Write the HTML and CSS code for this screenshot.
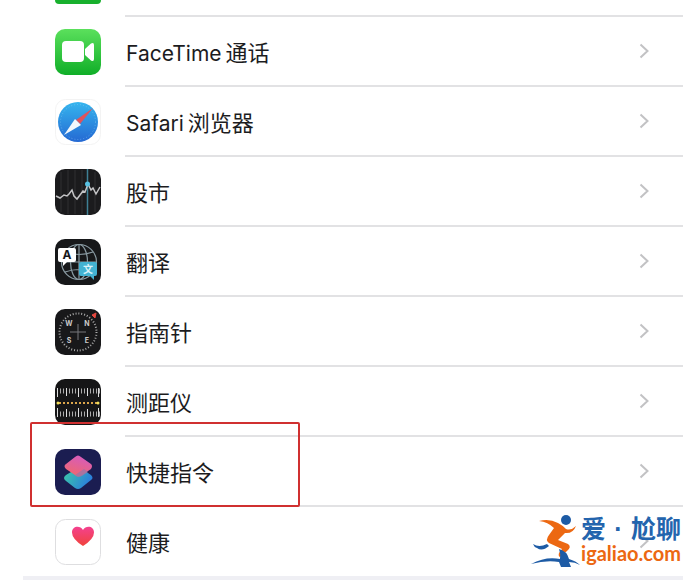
FILE: index.html
```
<!DOCTYPE html>
<html lang="zh-CN">

<head>
    <title>设置</title>
    <meta charset="utf-8">
    <meta name="viewport" content="width=device-width, initial-scale=1">
    <link rel="stylesheet" href="styles.css">
</head>

<body>
    <svg class="defs" aria-hidden="true">
        <defs>
            <linearGradient id="green" x1="0" y1="0" x2="0" y2="1">
                <stop offset="0" stop-color="#5be05c" />
                <stop offset="1" stop-color="#10ae28" />
            </linearGradient>
            <linearGradient id="blue" x1="0" y1="0" x2="0" y2="1">
                <stop offset="0" stop-color="#35b5ee" />
                <stop offset="1" stop-color="#2569d3" />
            </linearGradient>
            <linearGradient id="pink" x1="0.7" y1="0" x2="0.3" y2="1">
                <stop offset="0" stop-color="#d55bc0" />
                <stop offset="1" stop-color="#f0686c" />
            </linearGradient>
            <linearGradient id="teal" x1="0" y1="0" x2="1" y2="0.4">
                <stop offset="0" stop-color="#3ccba5" />
                <stop offset="1" stop-color="#2b7fdc" />
            </linearGradient>
            <linearGradient id="heart" x1="0" y1="0" x2="0" y2="1">
                <stop offset="0" stop-color="#f4418f" />
                <stop offset="1" stop-color="#f0433b" />
            </linearGradient>
            <symbol id="chevron" viewBox="0 0 10 16">
                <path d="M1.5 1.5L8.5 8L1.5 14.5" fill="none" stroke="#c2c2c4" stroke-width="2" />
            </symbol>
        </defs>
    </svg>

    <main class="page">
        <ul class="list">
            <li class="row row-cut">
                <span class="icon-green"></span>
                <span class="line"></span>
            </li>
            <li class="row">
                <svg class="icon" viewBox="0 0 46 46">
                    <rect width="46" height="46" rx="10" fill="url(#green)" />
                    <rect x="7" y="12" width="22" height="21" rx="4" fill="#fff" />
                    <path d="M30 20L36 14.500Q39 13 39 16V30Q39 33 36 31.500L30 26Z" fill="#fff" />
                </svg>
                <a class="line" href="#facetime"><span><span class="en">FaceTime</span>通话</span><svg class="chevron"><use href="#chevron" /></svg></a>
            </li>
            <li class="row">
                <svg class="icon" viewBox="0 0 46 46">
                    <rect x="0.500" y="0.500" width="45" height="45" rx="10" fill="#fff" stroke="#f3f3f3" />
                    <circle cx="23" cy="23" r="20" fill="url(#blue)" />
                    <circle cx="23" cy="23" r="17.500" fill="none" stroke="#8cd0f5" stroke-dasharray="1 2" opacity=".5" />
                    <path d="M38 9L21 21L25 25Z" fill="#e0525b" />
                    <path d="M9 36L20 20L26 26Z" fill="#f2f7fc" />
                </svg>
                <a class="line" href="#safari"><span><span class="en">Safari</span>浏览器</span><svg class="chevron"><use href="#chevron" /></svg></a>
            </li>
            <li class="row">
                <svg class="icon" viewBox="0 0 46 46">
                    <rect width="46" height="46" rx="10" fill="#1b1b1d" />
                    <path d="M6 3V43M13 1V45M20 1V45M27 1V45M40 3V43" stroke="#303033" />
                    <path d="M32.500 0V46" stroke="#3f8095" stroke-width="1.500" />
                    <path d="M1 27L5 29L9 26L12 27L14 25L17 21L19 27L22 30L25 26L28 22L30 23L33 15L36 21L38 19L41 25L45 18" fill="none" stroke="#c3c3c5" stroke-width="1.500" />
                    <circle cx="32.500" cy="15" r="2.500" fill="#57c1e2" />
                </svg>
                <a class="line" href="#stocks">股市<svg class="chevron"><use href="#chevron" /></svg></a>
            </li>
            <li class="row">
                <svg class="icon" viewBox="0 0 46 46">
                    <rect width="46" height="46" rx="10" fill="#17181a" />
                    <g fill="none" stroke="#8a9ba3" stroke-width="1.200">
                        <circle cx="24" cy="23" r="17.500" />
                        <ellipse cx="24" cy="23" rx="8.500" ry="17.500" />
                        <path d="M24 5V41M7 23H41M10 13Q24 18 38 13M10 33Q24 28 38 33" />
                    </g>
                    <path d="M5 9H19Q21 9 21 11V21Q21 23 19 23H12L8 27V23H5Q3 23 3 21V11Q3 9 5 9Z" fill="#fff" />
                    <path d="M26 23H40Q42 23 42 25V35Q42 37 40 37H39V41L35 37H26Q24 37 24 35V25Q24 23 26 23Z" fill="#43b2d2" />
                    <text class="glyph" x="12" y="20">A</text>
                    <text class="glyph glyph-cn" x="33" y="34">文</text>
                </svg>
                <a class="line" href="#translate">翻译<svg class="chevron"><use href="#chevron" /></svg></a>
            </li>
            <li class="row">
                <svg class="icon" viewBox="0 0 46 46">
                    <rect width="46" height="46" rx="10" fill="#18181a" />
                    <circle cx="23" cy="23" r="18.500" fill="none" stroke="#aaa" stroke-width="2" stroke-dasharray="1 1.900" />
                    <path d="M23 15V31M15 23H31" stroke="#77777a" />
                    <path d="M37 6L41 4L40 9Z" fill="#e4473f" stroke="#e4473f" />
                    <g class="points">
                        <text x="14" y="17">W</text>
                        <text x="32" y="17">N</text>
                        <text x="14" y="34">S</text>
                        <text x="32" y="34">E</text>
                    </g>
                </svg>
                <a class="line" href="#compass">指南针<svg class="chevron"><use href="#chevron" /></svg></a>
            </li>
            <li class="row">
                <svg class="icon" viewBox="0 0 46 46">
                    <rect width="46" height="46" rx="10" fill="#161617" />
                    <path d="M2 12H45" stroke="#aaa" stroke-width="5" stroke-dasharray="1 2" />
                    <path d="M2.500 9V18M11.500 9V17M23.500 9V18M32.500 9V17M43.500 9V18" stroke="#ddd" />
                    <path d="M2 35H45" stroke="#aaa" stroke-width="5" stroke-dasharray="1 2" />
                    <path d="M2.500 29V38M11.500 30V38M23.500 29V38M32.500 30V38M43.500 29V38" stroke="#ddd" />
                    <path d="M4 24H42" stroke="#dca64b" stroke-width="2" stroke-dasharray="2 2" />
                    <circle cx="3" cy="24" r="1.500" fill="#f2e05b" />
                    <circle cx="43" cy="24" r="1.500" fill="#f2e05b" />
                </svg>
                <a class="line" href="#measure">测距仪<svg class="chevron"><use href="#chevron" /></svg></a>
            </li>
            <li class="row row-marked">
                <svg class="icon" viewBox="0 0 46 46">
                    <rect width="46" height="46" rx="10" fill="#1b1d51" />
                    <path d="M11 26L21 20H27L36 26Q39 29 36 31L26 39Q23 41 20 39L11 32Q7 29 11 26Z" fill="url(#teal)" />
                    <path d="M11 15L20 8Q23 5 26 8L36 15Q38 17 36 20L27 26Q23 29 20 26L11 20Q8 17 11 15Z" fill="url(#pink)" />
                    <path d="M20 26L29 20L33 23L27 27Q23 29 20 26Z" fill="#9e75a5" opacity=".8" />
                </svg>
                <a class="line" href="#shortcuts">快捷指令<svg class="chevron"><use href="#chevron" /></svg></a>
            </li>
            <li class="row">
                <svg class="icon" viewBox="0 0 46 46">
                    <rect x="0.500" y="0.500" width="45" height="45" rx="10" fill="#fff" stroke="#dedee0" />
                    <path d="M28 27Q17 20 17 13.500C17 7 25 6 28 11C31 6 39 7 39 13.500Q39 20 28 27Z" fill="url(#heart)" />
                </svg>
                <a class="line" href="#health">健康<svg class="chevron"><use href="#chevron" /></svg></a>
                <div class="watermark">
                    <svg class="runner" viewBox="0 0 50 54">
                        <circle cx="35" cy="6" r="5" fill="#1d5ba5" />
                        <path d="M8 7Q18 4 27 9Q31 11 35 15Q40 17 45 12Q42 20 34 19L27 26L37 30Q41 33 36 37L29 43Q27 42 28 39L31 35L18 29Q14 26 18 21L23 14Q17 8 8 7Z" fill="#ec6812" />
                        <path d="M2 30Q8 34 16 30L18 32Q11 38 6 34Q3 33 2 30Z" fill="#1d5ba5" />
                        <path d="M0 50Q15 42 29 45Q30 40 28 35Q36 37 38 45Q45 47 49 51Q44 48 38 48L40 53H30L28 48Q15 46 0 50Z" fill="#1d5ba5" />
                    </svg>
                    <div>
                        <div class="brand"><span>爱</span><span>·</span><span>尬聊</span></div>
                        <div class="site">igaliao.com</div>
                    </div>
                </div>
            </li>
        </ul>
    </main>
</body>

</html>
```
FILE: styles.css
```
* {
    box-sizing: border-box;
}

body {
    margin: 0;
    background-color: #fff;
    color: #1c1c1e;
    font-family: Inter, "Noto Sans CJK SC", sans-serif;
    font-size: 22px;
    overflow: hidden;
}

.defs {
    position: absolute;
    width: 0;
    height: 0;
}

.page {
    margin: 0 10px 0 23px;
}

.list {
    margin: 0;
    padding: 0;
    list-style: none;
    border-bottom: 8px solid #efeff4;
}

.row {
    position: relative;
    display: flex;
    align-items: center;
    gap: 24px;
    height: 70px;
    padding-left: 32px;
}

.row:last-child {
    height: 69px;
}

.icon {
    flex: none;
    width: 46px;
    height: 46px;
}

.line {
    flex: 1;
    display: flex;
    align-items: center;
    justify-content: space-between;
    height: 100%;
    padding: 0 34px 0 1px;
    border-bottom: 2px solid #e2e2e4;
    color: inherit;
    text-decoration: none;
}

.row:last-child .line {
    border-bottom-color: transparent;
}

.en {
    margin-right: 4px;
    font-size: 21px;
}

.chevron {
    width: 10px;
    height: 16px;
}

/* Zeile oben angeschnitten */
.row-cut {
    height: 17px;
    align-items: flex-start;
}

.icon-green {
    width: 46px;
    height: 4px;
    border-radius: 0 0 10px 10px;
    background-color: #18b02d;
}

/* rote Markierung */
.row-marked::after {
    content: "";
    position: absolute;
    top: -15px;
    left: 7px;
    box-sizing: border-box;
    width: 270px;
    height: 85px;
    border: 2px solid #d03030;
    border-radius: 2px;
    pointer-events: none;
}

.glyph {
    fill: #17181a;
    font-size: 12px;
    font-weight: 700;
    text-anchor: middle;
}

.glyph-cn {
    fill: #d9f2fa;
    font-size: 10px;
}

.points {
    fill: #ccc;
    font-size: 7px;
    font-weight: 700;
    text-anchor: middle;
}

.watermark {
    position: absolute;
    right: 2px;
    bottom: 8px;
    display: flex;
    align-items: flex-start;
    pointer-events: none;
}

.runner {
    width: 50px;
    height: 54px;
}

.brand {
    display: flex;
    justify-content: space-between;
    color: #2364ad;
    font-family: "Liberation Sans", "Noto Sans CJK SC", sans-serif;
    font-size: 25px;
    font-weight: 700;
    line-height: 30px;
}

.site {
    color: #ec6812;
    font-family: Lato, sans-serif;
    font-size: 20px;
    font-weight: 700;
    line-height: 18px;
}
```
